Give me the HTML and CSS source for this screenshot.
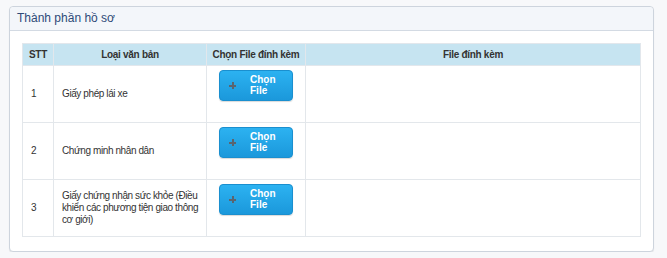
FILE: index.html
```html
<!DOCTYPE html>
<html lang="vi">
<head>
<meta charset="utf-8">
<link rel="stylesheet" href="styles.css">
</head>
<body>
<div class="panel">
  <div class="panel-head">Thành phần hồ sơ</div>
  <div class="panel-body">
    <table class="docs">
      <colgroup>
        <col class="c-stt"><col class="c-type"><col class="c-pick"><col class="c-file">
      </colgroup>
      <thead>
        <tr><th>STT</th><th>Loại văn bản</th><th>Chọn File đính kèm</th><th>File đính kèm</th></tr>
      </thead>
      <tbody>
        <tr>
          <td>1</td><td>Giấy phép lái xe</td>
          <td class="pick"><button class="btn"><span class="plus"></span><span class="lbl">Chọn<br>File</span></button></td>
          <td></td>
        </tr>
        <tr>
          <td>2</td><td>Chứng minh nhân dân</td>
          <td class="pick"><button class="btn"><span class="plus"></span><span class="lbl">Chọn<br>File</span></button></td>
          <td></td>
        </tr>
        <tr>
          <td>3</td><td>Giấy chứng nhận sức khỏe (Điều khiển các phương tiện giao thông cơ giới)</td>
          <td class="pick"><button class="btn"><span class="plus"></span><span class="lbl">Chọn<br>File</span></button></td>
          <td></td>
        </tr>
      </tbody>
    </table>
  </div>
</div>
</body>
</html>
```
FILE: styles.css
```css
html, body {
  margin: 0;
  padding: 0;
  background: #f7f8fa;
  font-family: "Liberation Sans", Arial, sans-serif;
}
.panel {
  margin: 6px 0 0 9px;
  width: 643px;
  height: 244px;
  background: #fff;
  border: 1px solid #cdd4dd;
  border-radius: 4px;
  box-shadow: 0 1px 1px rgba(0,0,0,0.08);
}
.panel-head {
  height: 23px;
  line-height: 23px;
  padding-left: 7px;
  background: #f3f6fa;
  border-bottom: 1px solid #d3dae3;
  border-radius: 4px 4px 0 0;
  color: #2e4a78;
  font-size: 12px;
}
.panel-body {
  padding: 12px 13px 0 12px;
}
.docs {
  width: 618px;
  border-collapse: collapse;
  table-layout: fixed;
  font-size: 10px;
  color: #333;
}
.c-stt { width: 31px; }
.c-type { width: 153px; }
.c-pick { width: 99px; }
.c-file { width: 335px; }
.docs thead tr { height: 22px; }
.docs tbody tr { height: 57px; }
.docs th {
  padding: 0;
  background: #c6e4f1;
  border: 1px solid #e2e7ec;
  font-weight: bold;
  font-size: 10px;
  letter-spacing: -0.3px;
  color: #333;
  text-align: center;
}
.docs td {
  padding: 0 5px 0 8px;
  border: 1px solid #e3e7eb;
  vertical-align: middle;
  line-height: 12px;
  letter-spacing: -0.4px;
}
.docs td.pick {
  vertical-align: top;
  padding: 4px 0 0 12px;
}
.btn {
  display: flex;
  align-items: center;
  width: 74px;
  height: 31px;
  padding: 0 0 0 9px;
  border: 1px solid #1a8fcf;
  border-radius: 4px;
  background: linear-gradient(#2cb2f1, #1b98db);
  box-shadow: 0 1px 1px rgba(0,0,0,0.15);
  font-family: "Liberation Sans", Arial, sans-serif;
  cursor: pointer;
}
.plus {
  position: relative;
  width: 7px;
  height: 7px;
  margin-right: 14px;
}
.plus::before, .plus::after {
  content: "";
  position: absolute;
  background: #5a6570;
}
.plus::before { left: 0; top: 2.5px; width: 7px; height: 2px; }
.plus::after { left: 2.5px; top: 0; width: 2px; height: 7px; }
.lbl {
  color: #fff;
  font-weight: bold;
  font-size: 10px;
  line-height: 10.5px;
  letter-spacing: 0;
  text-align: left;
}
```
